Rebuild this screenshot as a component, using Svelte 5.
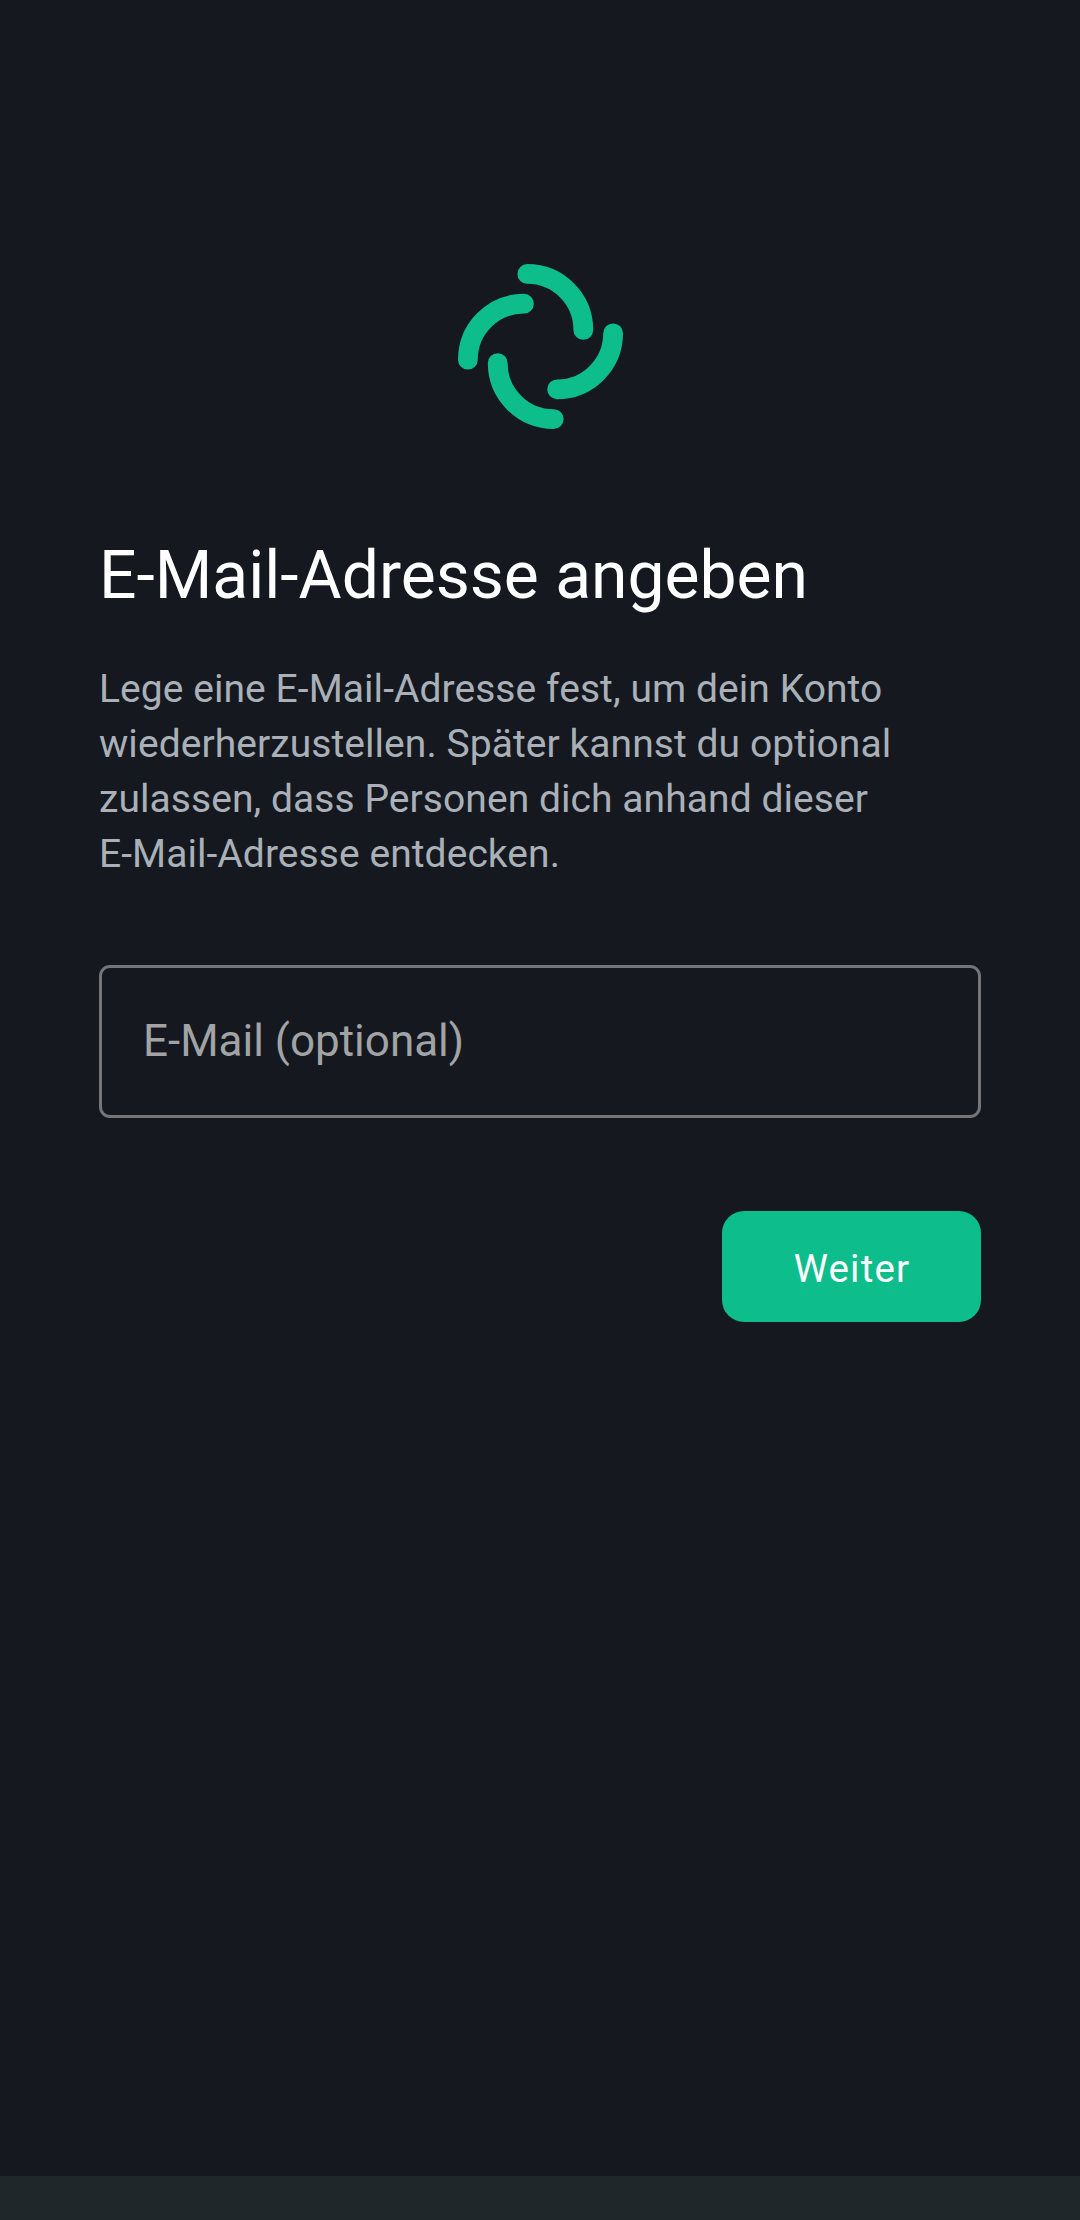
<script>
  let email = $state('');
</script>

<main>
  <section>
    <svg class="logo" viewBox="0 0 165 165" fill="none" stroke="#0dbd8b" stroke-width="19.8" stroke-linecap="round">
      {#each [0, 90, 180, 270] as angle}
        <path d="M69.3 9.9A56 56 0 0 1 125.3 65.9" transform="rotate({angle} 82.5 82.5)" />
      {/each}
    </svg>
    <h1>E-Mail-Adresse angeben</h1>
    <p>Lege eine E-Mail-Adresse fest, um dein Konto<br />wiederherzustellen. Später kannst du optional<br />zulassen, dass Personen dich anhand dieser<br />E-Mail-Adresse entdecken.</p>
    <input type="email" placeholder="E-Mail (optional)" aria-label="E-Mail (optional)" bind:value={email} />
    <button type="button">Weiter</button>
  </section>
  <footer></footer>
</main>

<style>
  :global(body) { background: #15191f; }
  main {
    width: 1080px;
    height: 2220px;
    display: flex;
    flex-direction: column;
    background: #15191f;
    font-family: Roboto, sans-serif;
  }
  section {
    flex: 1;
    display: flex;
    flex-direction: column;
    padding: 264px 99px 0;
  }
  .logo { width: 165px; height: 165px; align-self: center; flex: none; }
  h1 {
    margin: 108px 0 0;
    font-size: 66px;
    line-height: 78px;
    font-weight: 400;
    color: #fff;
    white-space: nowrap;
  }
  p {
    margin: 47px 0 0;
    font-size: 39px;
    line-height: 55px;
    letter-spacing: 0.06px;
    color: #a9b0b8;
    white-space: nowrap;
  }
  input {
    box-sizing: border-box;
    width: 882px;
    height: 153px;
    margin: 83px 0 0;
    padding: 0 41px 2px;
    border: 3px solid #737579;
    border-radius: 11px;
    outline: none;
    background: transparent;
    color: #fff;
    font: 400 44px Roboto, sans-serif;
  }
  input::placeholder { color: #a1a3a5; opacity: 1; }
  button {
    align-self: flex-end;
    width: 259px;
    height: 111px;
    margin: 93px 0 0;
    padding: 3px 0 0 1px;
    border: 0;
    border-radius: 22px;
    background: #0dbd8b;
    color: #fff;
    font: 400 38.5px Roboto, sans-serif;
    letter-spacing: 1.2px;
  }
  footer { height: 44px; background: #20272a; }
</style>
